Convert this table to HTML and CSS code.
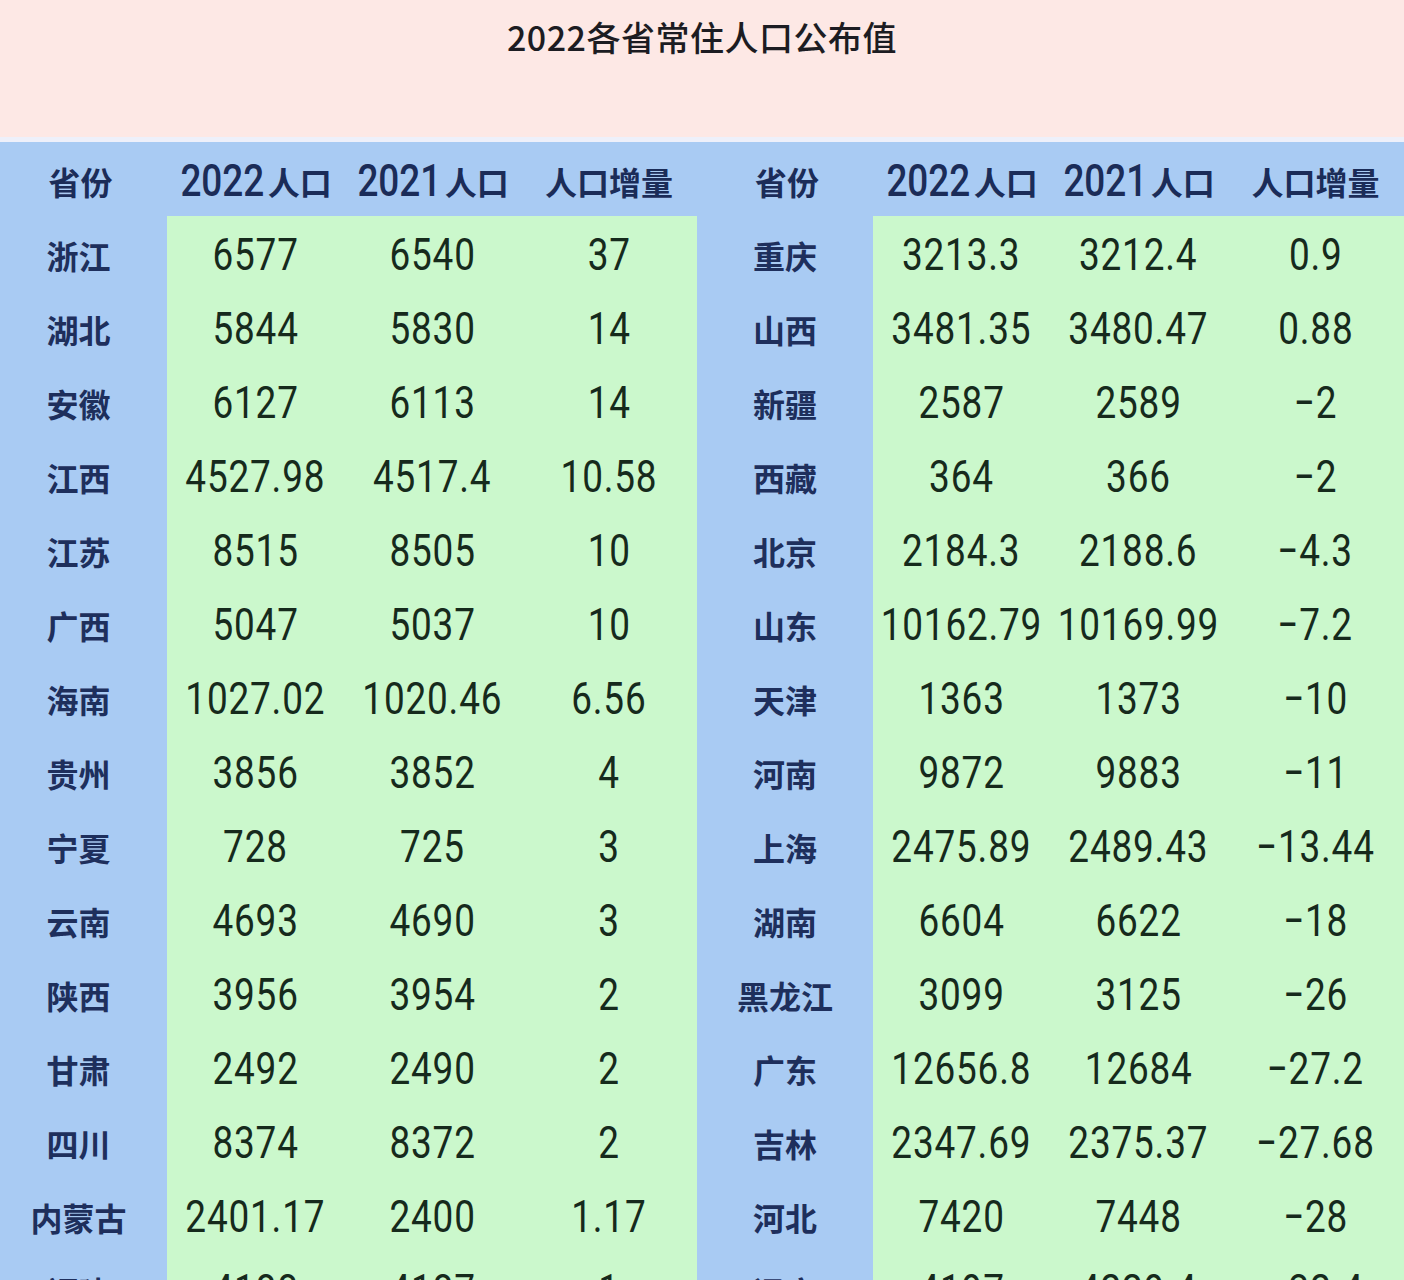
FILE: index.html
```html
<!DOCTYPE html>
<html lang="zh-CN">
<head>
<meta charset="utf-8">
<title>2022各省常住人口公布值</title>
<link rel="stylesheet" href="styles.css">
</head>
<body>
<div class="page">
  <header class="title-bar">
    <h1 class="title">2022各省常住人口公布值</h1>
  </header>
  <div class="tables">
    <div class="half left">
      <div class="hd prov">省份</div><div class="hd"><span class="hn">2022</span>人口</div><div class="hd"><span class="hn">2021</span>人口</div><div class="hd">人口增量</div>
      <div class="prov">浙江</div><div class="c"><span class="n">6577</span></div><div class="c"><span class="n">6540</span></div><div class="c"><span class="n">37</span></div>
      <div class="prov">湖北</div><div class="c"><span class="n">5844</span></div><div class="c"><span class="n">5830</span></div><div class="c"><span class="n">14</span></div>
      <div class="prov">安徽</div><div class="c"><span class="n">6127</span></div><div class="c"><span class="n">6113</span></div><div class="c"><span class="n">14</span></div>
      <div class="prov">江西</div><div class="c"><span class="n">4527.98</span></div><div class="c"><span class="n">4517.4</span></div><div class="c"><span class="n">10.58</span></div>
      <div class="prov">江苏</div><div class="c"><span class="n">8515</span></div><div class="c"><span class="n">8505</span></div><div class="c"><span class="n">10</span></div>
      <div class="prov">广西</div><div class="c"><span class="n">5047</span></div><div class="c"><span class="n">5037</span></div><div class="c"><span class="n">10</span></div>
      <div class="prov">海南</div><div class="c"><span class="n">1027.02</span></div><div class="c"><span class="n">1020.46</span></div><div class="c"><span class="n">6.56</span></div>
      <div class="prov">贵州</div><div class="c"><span class="n">3856</span></div><div class="c"><span class="n">3852</span></div><div class="c"><span class="n">4</span></div>
      <div class="prov">宁夏</div><div class="c"><span class="n">728</span></div><div class="c"><span class="n">725</span></div><div class="c"><span class="n">3</span></div>
      <div class="prov">云南</div><div class="c"><span class="n">4693</span></div><div class="c"><span class="n">4690</span></div><div class="c"><span class="n">3</span></div>
      <div class="prov">陕西</div><div class="c"><span class="n">3956</span></div><div class="c"><span class="n">3954</span></div><div class="c"><span class="n">2</span></div>
      <div class="prov">甘肃</div><div class="c"><span class="n">2492</span></div><div class="c"><span class="n">2490</span></div><div class="c"><span class="n">2</span></div>
      <div class="prov">四川</div><div class="c"><span class="n">8374</span></div><div class="c"><span class="n">8372</span></div><div class="c"><span class="n">2</span></div>
      <div class="prov">内蒙古</div><div class="c"><span class="n">2401.17</span></div><div class="c"><span class="n">2400</span></div><div class="c"><span class="n">1.17</span></div>
      <div class="prov">福建</div><div class="c"><span class="n">4188</span></div><div class="c"><span class="n">4187</span></div><div class="c"><span class="n">1</span></div>
    </div>
    <div class="half right">
      <div class="hd prov">省份</div><div class="hd"><span class="hn">2022</span>人口</div><div class="hd"><span class="hn">2021</span>人口</div><div class="hd">人口增量</div>
      <div class="prov">重庆</div><div class="c"><span class="n">3213.3</span></div><div class="c"><span class="n">3212.4</span></div><div class="c"><span class="n">0.9</span></div>
      <div class="prov">山西</div><div class="c"><span class="n">3481.35</span></div><div class="c"><span class="n">3480.47</span></div><div class="c"><span class="n">0.88</span></div>
      <div class="prov">新疆</div><div class="c"><span class="n">2587</span></div><div class="c"><span class="n">2589</span></div><div class="c"><span class="n">−2</span></div>
      <div class="prov">西藏</div><div class="c"><span class="n">364</span></div><div class="c"><span class="n">366</span></div><div class="c"><span class="n">−2</span></div>
      <div class="prov">北京</div><div class="c"><span class="n">2184.3</span></div><div class="c"><span class="n">2188.6</span></div><div class="c"><span class="n">−4.3</span></div>
      <div class="prov">山东</div><div class="c"><span class="n">10162.79</span></div><div class="c"><span class="n">10169.99</span></div><div class="c"><span class="n">−7.2</span></div>
      <div class="prov">天津</div><div class="c"><span class="n">1363</span></div><div class="c"><span class="n">1373</span></div><div class="c"><span class="n">−10</span></div>
      <div class="prov">河南</div><div class="c"><span class="n">9872</span></div><div class="c"><span class="n">9883</span></div><div class="c"><span class="n">−11</span></div>
      <div class="prov">上海</div><div class="c"><span class="n">2475.89</span></div><div class="c"><span class="n">2489.43</span></div><div class="c"><span class="n">−13.44</span></div>
      <div class="prov">湖南</div><div class="c"><span class="n">6604</span></div><div class="c"><span class="n">6622</span></div><div class="c"><span class="n">−18</span></div>
      <div class="prov">黑龙江</div><div class="c"><span class="n">3099</span></div><div class="c"><span class="n">3125</span></div><div class="c"><span class="n">−26</span></div>
      <div class="prov">广东</div><div class="c"><span class="n">12656.8</span></div><div class="c"><span class="n">12684</span></div><div class="c"><span class="n">−27.2</span></div>
      <div class="prov">吉林</div><div class="c"><span class="n">2347.69</span></div><div class="c"><span class="n">2375.37</span></div><div class="c"><span class="n">−27.68</span></div>
      <div class="prov">河北</div><div class="c"><span class="n">7420</span></div><div class="c"><span class="n">7448</span></div><div class="c"><span class="n">−28</span></div>
      <div class="prov">辽宁</div><div class="c"><span class="n">4197</span></div><div class="c"><span class="n">4229.4</span></div><div class="c"><span class="n">−32.4</span></div>
    </div>
  </div>
</div>
</body>
</html>
```

FILE: styles.css
```css
html, body {
  margin: 0;
  padding: 0;
}
body {
  width: 1404px;
  height: 1280px;
  overflow: hidden;
  background: #a9cbf3;
  font-family: "Noto Sans CJK SC", "Noto Sans", sans-serif;
}
.page {
  width: 1404px;
}
.title-bar {
  height: 142px;
  background: #fde8e5;
  border-bottom: 5px solid #eef0fa;
  box-sizing: border-box;
  display: flex;
  justify-content: center;
  padding-top: 15px;
}
.title {
  margin: 0;
  font-size: 34px;
  line-height: 44px;
  font-weight: 500;
  letter-spacing: 0.5px;
  color: #1c1c22;
}
.tables {
  display: flex;
  background: #a9cbf3;
}
.half {
  display: grid;
  grid-auto-rows: 74px;
}
.half.left {
  width: 697px;
  grid-template-columns: 167px 177px 177px 176px;
}
.half.right {
  width: 707px;
  grid-template-columns: 176px 177px 177px 177px;
}
.half > div {
  display: flex;
  align-items: center;
  justify-content: center;
  white-space: nowrap;
}
.half .hd {
  height: 71px;
  font-size: 32px;
  font-weight: 700;
  color: #1b2c58;
  padding-top: 6px;
  box-sizing: border-box;
}
.half .hd.prov {
  padding-left: 4px;
}
.prov {
  font-size: 32px;
  font-weight: 700;
  color: #1e2f5c;
  padding-top: 4px;
}
.left .prov {
  padding-right: 10px;
}
.c {
  background: #cbf8cc;
  color: #162a1c;
}
.half .hd + .hd {
  background: transparent;
}
.n {
  display: inline-block;
  font-family: Roboto, "DejaVu Sans", sans-serif;
  font-size: 45px;
  font-weight: 400;
  transform: scaleX(0.82);
  letter-spacing: 1px;
  padding-top: 2px;
}
.hn {
  display: inline-block;
  font-family: Roboto, "DejaVu Sans", sans-serif;
  font-size: 45px;
  font-weight: 500;
  transform: scaleX(0.82);
  margin: 0 -8px 0 -8px;
  padding-right: 2px;
  color: #1b2c58;
}
```
